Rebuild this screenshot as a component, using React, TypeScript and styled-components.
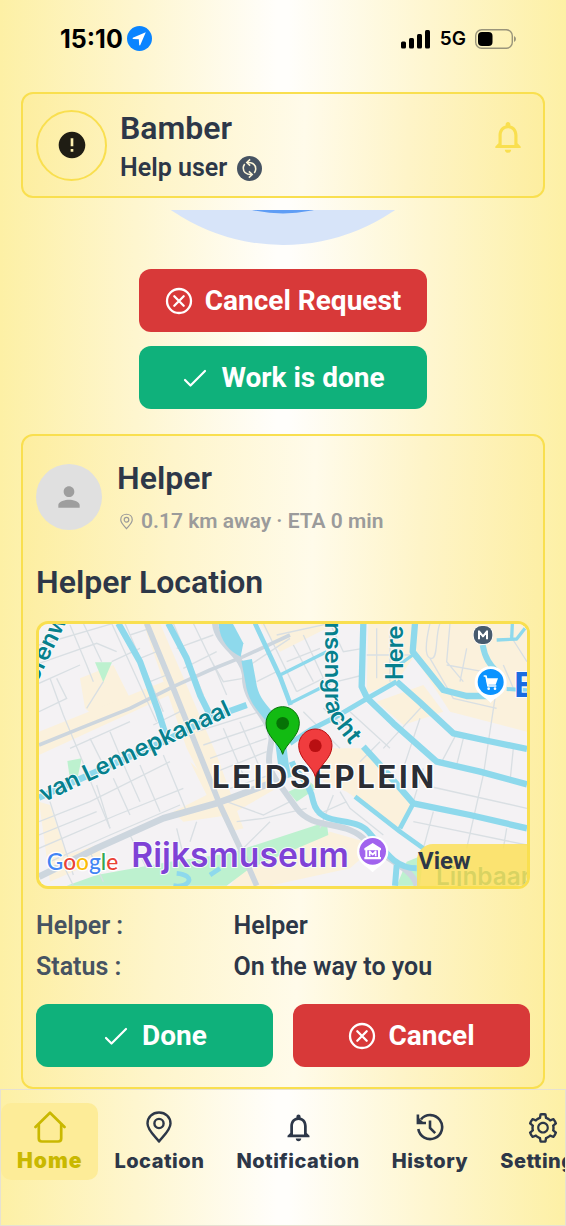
import React from "react";
import styled, { createGlobalStyle } from "styled-components";
import { MdError, MdNotificationsNone, MdPerson } from "react-icons/md";
import { AiOutlineSetting } from "react-icons/ai";

const ink = "#2d3748";
const slate = "#465362";
const gold = "#f9df4f";
const red = "#d83939";
const green = "#0fb17b";

const Global = createGlobalStyle`
  *, *::before, *::after { box-sizing: border-box; }
  body { margin: 0; font-family: Roboto, sans-serif; color: ${ink}; }
  h1, h2, h3, p, dl, dd, dt { margin: 0; }
  button { font-family: inherit; cursor: pointer; }
`;

const Screen = styled.div`
  min-height: 100vh;
  display: flex;
  flex-direction: column;
  background: linear-gradient(90deg, #fdf0a5 0%, #fef6cf 24%, #fffefb 49%, #fffefb 51%, #fef6cf 76%, #fdf0a5 100%);
`;

const StatusBar = styled.div`
  display: flex;
  justify-content: space-between;
  align-items: center;
  height: 77px;
  padding: 0 50px 0 60px;
  font-family: Inter, sans-serif;
  color: #000;
`;

const StatusGroup = styled.div<{ $gap: number }>`
  display: flex;
  align-items: center;
  gap: ${(p) => p.$gap}px;
`;

const Clock = styled.span`
  font-size: 25px;
  font-weight: 700;
`;

const Network = styled.span`
  font-size: 19px;
  font-weight: 600;
`;

const Panel = styled.section`
  border: 2px solid ${gold};
  border-radius: 12px;
  background: linear-gradient(92deg, #fdeea0 0%, #fef5cb 28%, #fffbea 54%, #fef4c8 74%, #fdeea0 100%);
`;

const Profile = styled(Panel)`
  display: flex;
  align-items: center;
  gap: 13px;
  height: 106px;
  margin: 15px 21px 0;
  padding: 0 16px 0 13px;
`;

const AlertRing = styled.div`
  display: grid;
  place-items: center;
  flex: none;
  width: 71px;
  height: 71px;
  border: 2px solid ${gold};
  border-radius: 50%;
  color: #1f1d14;
`;

const ProfileText = styled.div`
  flex: 1;
  padding-top: 6px;
`;

const Title = styled.h1`
  font-size: 32px;
  line-height: 40px;
  font-weight: 600;
`;

const Role = styled.p`
  display: flex;
  align-items: center;
  gap: 10px;
  font-size: 25px;
  line-height: 40px;
  font-weight: 600;
`;

const IconButton = styled.button`
  display: flex;
  padding: 0;
  border: 0;
  background: none;
  color: ${gold};
  margin-bottom: 16px;
`;

const Content = styled.main`
  flex: 1;
  display: flex;
  flex-direction: column;
  align-items: stretch;
  margin-top: 12px;
  padding: 0 21px;
`;

const Radar = styled.svg`
  display: block;
  align-self: center;
`;

const Actions = styled.div`
  display: flex;
  flex-direction: column;
  align-self: center;
  gap: 14px;
  width: 55%;
  min-width: 288px;
  margin: 24px 0 25px;
`;

const ActionButton = styled.button<{ $color: string }>`
  display: flex;
  align-items: center;
  justify-content: center;
  gap: 12px;
  height: 63px;
  width: 100%;
  padding: 0;
  border: 0;
  border-radius: 12px;
  background: ${(p) => p.$color};
  color: #fff;
  font-size: 28px;
  font-weight: 700;
  white-space: nowrap;
`;

const HelperCard = styled(Panel)`
  padding: 19px 13px 20px;
`;

const HelperHead = styled.div`
  display: flex;
  gap: 15px;
  align-items: center;
  height: 84px;
`;

const HelperText = styled.div`
  padding-top: 8px;
`;

const Avatar = styled.div`
  display: grid;
  place-items: center;
  flex: none;
  width: 66px;
  height: 66px;
  border-radius: 50%;
  background: #e0e0e0;
  color: #9e9e9e;
`;

const Meta = styled.p`
  display: flex;
  align-items: center;
  gap: 8px;
  padding-left: 3px;
  font-size: 21px;
  line-height: 46px;
  font-weight: 600;
  color: #9b9b9b;
`;

const Heading = styled.h2`
  margin: 23px 0 19px;
  font-size: 32px;
  line-height: 40px;
  font-weight: 600;
`;

const MapFrame = styled.div`
  position: relative;
  height: 268px;
  border: 3px solid ${gold};
  border-radius: 12px;
  overflow: hidden;
`;

const MapCanvas = styled.svg`
  display: block;
  width: 100%;
  height: 100%;
`;

const ViewButton = styled.button`
  position: absolute;
  right: 0;
  bottom: 0;
  width: 110px;
  height: 42px;
  padding: 0 0 8px 1px;
  border: 0;
  border-radius: 16px 0 0 0;
  background: rgba(252, 225, 91, 0.86);
  color: ${ink};
  font-size: 24px;
  font-weight: 700;
  text-align: left;
`;

const Details = styled.dl`
  display: grid;
  grid-template-columns: 40% 1fr;
  margin: 16px 0 17px;
  font-size: 25px;
  line-height: 41px;
  font-weight: 600;
`;

const Term = styled.dt`
  color: ${slate};
`;

const CardActions = styled.div`
  display: grid;
  grid-template-columns: 1fr 1fr;
  gap: 20px;
`;

const TabBar = styled.nav`
  display: flex;
  align-items: flex-start;
  height: 137px;
  padding: 13px 0 0;
  border: 1px solid #e6e1d2;
  overflow: hidden;
`;

const Tab = styled.a<{ $active?: boolean }>`
  display: flex;
  flex-direction: column;
  align-items: center;
  flex: none;
  height: 77px;
  padding: 8px 16px 0;
  border-radius: 10px;
  background: ${(p) => (p.$active ? "#fdec98" : "none")};
  color: ${(p) => (p.$active ? "#c9b800" : ink)};
  font-family: Inter, sans-serif;
  font-size: ${(p) => (p.$active ? 21 : 20)}px;
  line-height: 24px;
  font-weight: ${(p) => (p.$active ? 900 : 800)};
  letter-spacing: ${(p) => (p.$active ? 1 : 0.5)}px;
  text-decoration: none;
`;

const TabIcon = styled.span`
  display: grid;
  place-items: center;
  height: 32px;
  margin-bottom: 6px;
`;

const CheckIcon = () => (
  <svg width="28" height="28" viewBox="0 0 28 28" fill="none" stroke="#fff" strokeWidth="2.2" strokeLinecap="round" strokeLinejoin="round" aria-hidden="true">
    <path d="M4 16 L9.5 21.500 L24 7" />
  </svg>
);

const CrossIcon = () => (
  <svg width="28" height="28" viewBox="0 0 28 28" fill="none" stroke="#fff" strokeWidth="2.300" strokeLinecap="round" aria-hidden="true">
    <circle cx="14" cy="14" r="12" />
    <path d="M9.300 9.300 L18.700 18.700 M18.700 9.300 L9.300 18.700" />
  </svg>
);

const PinOutline = ({ width, height, stroke }: { width: number; height: number; stroke: number }) => (
  <svg width={width} height={height} viewBox="0 0 26 32" fill="none" stroke="currentColor" strokeWidth={stroke} strokeLinejoin="round" aria-hidden="true">
    <path d="M13 30.500 C10 26 1.500 19.500 1.500 12.500 C1.500 6 6.500 1.500 13 1.500 C19.500 1.500 24.500 6 24.500 12.500 C24.500 19.500 16 26 13 30.500 Z" />
    <circle cx="13" cy="12.500" r="4.600" />
  </svg>
);

const HomeIcon = () => (
  <svg width="32" height="32" viewBox="0 0 32 32" fill="none" stroke="currentColor" strokeWidth="2.700" strokeLinecap="round" strokeLinejoin="round" aria-hidden="true">
    <path d="M1.500 16 L16 1.800 L30.500 16" />
    <path d="M4.800 13.500 V27.500 Q4.800 30.500 7.800 30.500 H24.200 Q27.200 30.500 27.200 27.500 V13.500" />
  </svg>
);

const HistoryIcon = () => (
  <svg width="28" height="28" viewBox="0 0 28 28" fill="none" stroke="currentColor" strokeWidth="2.600" aria-hidden="true">
    <path d="M2.300 16 A12 12 0 1 0 5 6.300" />
    <path d="M1.900 1.500 V10 H10" />
    <path d="M2 4 L8 10 H2 Z" fill="currentColor" stroke="none" />
    <path d="M14 7.500 V15 L19.200 20.200" />
  </svg>
);

const SyncBadge = () => (
  <svg width="25" height="25" viewBox="0 0 24 24" aria-hidden="true">
    <circle cx="12" cy="12" r="12" fill={slate} />
    <g fill="none" stroke="#fdf6d8" strokeWidth="1.500">
      <path d="M10 6.200 Q17.800 6 18 12.500 Q17.900 14.500 16.600 16.300" />
      <path d="M14 17.800 Q6.200 18 6 11.500 Q6.100 9.500 7.400 7.700" />
      <path d="M12.600 3.200 L9.400 6.200 L12.600 9.200" />
      <path d="M11.400 14.800 L14.600 17.800 L11.400 20.800" />
    </g>
  </svg>
);

const StatusIcons = () => (
  <>
    <svg width="30" height="20" viewBox="0 0 30 20" aria-hidden="true">
      <rect x="0" y="12.500" width="5" height="7" rx="1.500" />
      <rect x="8" y="9" width="5" height="10.500" rx="1.500" />
      <rect x="16" y="5" width="5" height="14.500" rx="1.500" />
      <rect x="24" y="1" width="5" height="18.500" rx="1.500" />
    </svg>
    <Network>5G</Network>
    <svg width="41" height="20" viewBox="0 0 41 20" aria-hidden="true">
      <rect x="0.700" y="0.700" width="36.600" height="18.600" rx="6" fill="none" stroke="#9a957b" strokeWidth="1.400" />
      <path d="M39 7 Q41 8 41 10 Q41 12 39 13 Z" fill="#9a957b" />
      <rect x="3" y="3" width="14.500" height="14" rx="4" />
    </svg>
  </>
);

const MapPin = ({ x, y, fill, dot }: { x: number; y: number; fill: string; dot: string }) => (
  <g transform={`translate(${x} ${y})`}>
    <path d="M0 93 C-8 62 -50 40 -50 0 A50 50 0 0 1 50 0 C50 40 8 62 0 93 Z" fill={fill} stroke={dot} strokeWidth="3" />
    <circle r="19" fill={dot} />
  </g>
);

const MapArt = () => (
  <MapCanvas viewBox="27 27 1464 786" preserveAspectRatio="xMidYMid slice" role="img" aria-label="Map of helper location">
    <rect x="-500" y="0" width="2500" height="900" fill="#f4f2f4" />
    <g fill="#fbf1dc">
      <path d="M150 190 L250 150 L300 250 L330 270 L200 310 L165 280 Z" />
      <path d="M27 350 L400 200 L430 235 L27 420 Z" />
      <path d="M340 25 L390 25 L560 420 L640 640 L600 650 L470 400 Z" />
      <path d="M480 440 L600 560 L700 490 L740 520 L600 600 L460 620 L430 590 L530 540 Z" />
      <path d="M27 560 L60 570 L110 720 L200 690 L220 730 L60 800 Z" />
      <path d="M690 25 L800 25 L920 25 L750 110 Z" />
      <path d="M1015 25 L1145 25 L1155 120 L1100 200 L1010 235 Z" />
      <path d="M1165 25 L1491 25 L1491 350 L1260 290 L1150 120 Z" />
      <path d="M860 400 L1000 400 L1145 560 L1110 640 L950 530 L880 500 Z" />
      <path d="M1040 260 L1180 210 L1240 290 L1120 330 Z" />
      <path d="M600 812 L640 760 L900 650 L1040 690 L960 760 L720 812 Z" />
    </g>
    <g fill="#bdf1cf">
      <path d="M195 142 L246 142 L220 202 Z" />
      <path d="M112 438 L155 430 L142 492 L118 480 Z" />
      <path d="M110 812 L200 780 L420 740 L600 715 L890 620 L895 660 L660 760 L590 812 Z" />
      <path d="M775 530 L840 500 L860 520 L800 560 Z" />
      <path d="M1130 740 L1180 720 L1170 812 L1100 812 Z" />
    </g>
    <g fill="none" stroke="#d9dfe3" strokeWidth="4">
      <path d="M27 90 L250 25 M27 145 L200 85 L260 110 M27 205 L150 150 M27 290 L110 250 L80 190 M120 30 L170 150 L190 200 M160 25 L215 140 M60 190 L100 300 L150 420 L190 520 L240 640 M60 560 L130 780 M220 200 L170 280 M245 140 L330 100" />
      <path d="M120 400 L300 320 M180 370 L220 450 M240 350 L290 470 L330 560 M27 620 L180 560 L420 440 M27 660 L200 590 M27 700 L260 600 L460 520 M60 740 L240 660 L450 570 M200 510 L240 640 M250 490 L300 600 M330 450 L390 590 M400 420 L470 590" />
      <path d="M300 60 L360 40 M330 130 L380 110 M360 200 L410 180 M370 330 L450 290 M440 100 L550 60 M460 160 L560 110 M490 25 L560 170 L590 240 M540 130 L580 200 L640 190 M500 350 L690 290 M520 390 L700 330 M540 430 L710 370 M560 470 L710 410 M580 340 L640 480 M630 320 L690 460 M600 520 L720 480" />
      <path d="M430 25 L520 240 M285 25 L400 290 M245 25 L380 320 M590 560 L700 600 L780 560 M620 620 L700 610 L830 580 M640 700 L720 620 M500 620 L480 680 M440 640 L460 720 M300 660 L350 760 M180 710 L220 800 M100 750 L130 812" />
      <path d="M660 150 L780 70 M680 200 L740 170 M700 25 L800 230 M740 60 L900 25 M770 140 L870 100 M800 230 L880 190 M790 90 L850 200 M820 60 L880 190 M820 290 L930 400 M880 280 L950 340 M900 25 L940 110 L1000 100 M920 200 L1000 180" />
      <path d="M1040 40 L1040 190 M1080 60 L1080 200 M1010 120 L1140 120 M1200 25 C1180 110 1190 130 1205 130 C1225 130 1215 60 1230 25 M1260 25 L1250 140 L1300 200 M1310 100 L1290 200 M1250 150 L1360 170 M1200 130 L1270 250 L1400 280 M1440 60 L1491 140 M1420 150 L1450 220" />
      <path d="M1395 250 L1360 480 L1310 700 M1060 400 L1180 270 M1120 460 L1170 310 M1230 450 L1275 365 M1300 370 L1280 450 M1450 400 L1440 500 M1180 510 L1491 580 M1180 460 L1150 560 M1150 620 L1491 690 M1210 590 L1180 700 M1430 640 L1420 700 M960 290 L1080 400 M990 440 L1050 380 M930 530 L960 580 L1060 660 M860 600 L950 560 M870 640 L910 540" />
    </g>
    <g fill="none" stroke="#cdd6de" strokeLinejoin="round">
      <path strokeWidth="17" d="M350 25 L430 220 L510 420 L570 570 L640 720 L680 812" />
      <path strokeWidth="11" d="M27 390 L150 340 L300 280 L430 215 L540 165 L640 125 L780 60" />
      <path strokeWidth="20" d="M27 785 L200 700 L400 610 L560 565 L720 505" />
      <path strokeWidth="18" d="M555 25 C560 90 640 120 645 180 C640 260 715 300 725 370 C720 420 700 450 750 510 L800 580 C850 650 950 610 1010 680 C1060 730 1150 760 1160 812" />
    </g>
    <g fill="none" stroke="#8ed9ec" strokeWidth="19" strokeLinejoin="round">
      <path d="M265 25 L330 140 L385 290 L412 375" />
      <path d="M415 25 L470 130 L510 240 L545 310" />
      <path d="M27 548 L150 492 L400 380 L540 310 L650 270" />
      <path strokeWidth="32" d="M650 135 L662 200 C670 260 700 280 735 325 C760 370 750 430 770 490" />
      <path strokeWidth="14" d="M675 25 L710 100 L750 185 L782 270" />
      <path d="M1000 25 L995 215 L1012 250 L1090 325 L1220 440 L1350 470 L1491 508" />
      <path d="M1155 25 L1148 110 L1240 225 L1310 243 L1375 243" />
      <path strokeWidth="12" d="M1430 222 L1491 226" />
      <path d="M1100 200 L1170 262 L1270 355 L1375 378 L1491 402" />
      <path strokeWidth="15" d="M1100 200 L1012 250 L910 310 L840 345 L780 385" />
      <path d="M1000 395 L1050 450 L1150 565 L1320 600 L1491 640" />
      <path strokeWidth="14" d="M1150 565 L1110 640 M975 545 L1110 650 L1180 700" />
      <path strokeWidth="10" d="M750 180 L890 110 M780 265 L900 205 M1100 155 L1148 120 M750 180 L780 165" />
      <path strokeWidth="18" d="M1358 90 C1365 130 1380 150 1400 170" />
      <path strokeWidth="10" d="M1400 75 L1460 72 L1485 40 M1447 25 L1445 72" />
      <path strokeWidth="18" d="M785 440 C800 480 840 500 850 560 C870 640 970 600 1015 650 C1060 700 1090 760 1160 760 M1100 750 L1095 812" />
      <path strokeWidth="14" d="M430 812 C480 820 500 780 440 775 M540 780 L570 760" />
    </g>
    <path d="M565 25 L608 25 L640 85 L632 125 C600 110 570 80 565 25 Z" fill="#8ed9ec" />
    <g fontFamily="Inter, sans-serif" stroke="#f7fbfc" strokeWidth="6" strokeLinejoin="round" paintOrder="stroke">
      <g fill="#06808d" fontWeight="600" fontSize="71">
        <text transform="translate(42 562) rotate(-25)">van Lennepkanaal</text>
        <text transform="translate(20 205) rotate(-64)">orenw</text>
        <text transform="translate(1120 195) rotate(-90)">Here</text>
        <path id="canal" d="M885 22 L885 250 Q886 300 923 343 L1000 440" fill="none" stroke="none" />
        <text><textPath href="#canal">nsengracht</textPath></text>
        <text x="1218" y="810" fontSize="73">Lijnbaan</text>
      </g>
      <text x="1453" y="247" fontSize="102" fontWeight="700" fill="#1a6ce0">E</text>
      <text x="304" y="757" fontSize="101" fontWeight="600" fill="#7f42d6">Rijksmuseum</text>
      <g fill="#fff" stroke="none">
        <path d="M1028 772 C1015 755 981 745 981 710 A47 47 0 0 1 1075 710 C1075 745 1041 755 1028 772 Z" />
        <circle cx="1028" cy="709" r="40" fill="#a163ee" />
        <path d="M1003 700 L1028 684 L1053 700 V706 H1003 Z M1003 726 H1053 V733 H1003 Z M1006 706 H1012 V726 H1006 Z M1044 706 H1050 V726 H1044 Z" />
        <path d="M1019 724 V709 L1028 719 L1037 709 V724" fill="none" stroke="#fff" strokeWidth="5" />
        <path d="M1382 264 C1368 246 1334 238 1334 202 A48 48 0 0 1 1430 202 C1430 238 1396 246 1382 264 Z" />
        <circle cx="1382" cy="201" r="39" fill="#0b93ff" />
        <path d="M1368 190 H1404 L1397 209 H1372 Z" />
        <path d="M1361 183 H1368 L1374 213 H1399" fill="none" stroke="#fff" strokeWidth="5" />
        <circle cx="1376" cy="221" r="4" />
        <circle cx="1395" cy="221" r="4" />
        <rect x="1331" y="33" width="56" height="54" rx="24" fill="#485b6e" stroke="#fff" strokeWidth="4" />
        <path d="M1347 73 V49 L1359 64 L1371 49 V73" fill="none" stroke="#fff" strokeWidth="6" />
      </g>
    </g>
    <MapPin x={758} y={325} fill="#12bb12" dot="#067306" />
    <text x="546" y="520" fontFamily="Inter, sans-serif" fontSize="93" fontWeight="700" letterSpacing="8" fill="#2b2e35" stroke="#fff" strokeWidth="8" paintOrder="stroke">LEIDSEPLEIN</text>
    <MapPin x={856} y={392} fill="#f03c3e" dot="#b90f12" />
    <text x="50" y="766" fontFamily="Lato, sans-serif" fontSize="68" fontWeight="500" stroke="#fff" strokeWidth="8" paintOrder="stroke">
      <tspan fill="#4285f4">G</tspan><tspan fill="#ea4335">o</tspan><tspan fill="#fbbc05">o</tspan><tspan fill="#4285f4">g</tspan><tspan fill="#34a853">l</tspan><tspan fill="#ea4335">e</tspan>
    </text>
  </MapCanvas>
);

const tabs = [
  { label: "Home", icon: <HomeIcon />, active: true },
  { label: "Location", icon: <PinOutline width={26} height={32} stroke={2.4} /> },
  { label: "Notification", icon: <MdNotificationsNone size={33} /> },
  { label: "History", icon: <HistoryIcon /> },
  { label: "Settings", icon: <AiOutlineSetting size={34} /> },
];

export default function App() {
  return (
    <Screen>
      <Global />
      <StatusBar>
        <StatusGroup $gap={4}>
          <Clock>15:10</Clock>
          <svg width="25" height="25" viewBox="0 0 25 25" aria-hidden="true">
            <circle cx="12.500" cy="12.500" r="12.500" fill="#0a84ff" />
            <path d="M18.800 6.200 L5.800 11.800 Q5.200 12.500 6 12.900 L11.800 13.200 L12.200 19 Q12.700 19.700 13.200 19.200 Z" fill="#fff" />
          </svg>
        </StatusGroup>
        <StatusGroup $gap={9}>
          <StatusIcons />
        </StatusGroup>
      </StatusBar>

      <Profile>
        <AlertRing><MdError size={32} /></AlertRing>
        <ProfileText>
          <Title>Bamber</Title>
          <Role>Help user <SyncBadge /></Role>
        </ProfileText>
        <IconButton aria-label="Notifications"><MdNotificationsNone size={38} /></IconButton>
      </Profile>

      <Content>
        <Radar width="226" height="35" viewBox="0 0 226 35" aria-hidden="true">
          <circle cx="113" cy="-162" r="197" fill="#d7e4f9" />
          <circle cx="113" cy="-135" r="138.500" fill="#5f9df5" />
        </Radar>
        <Actions>
          <ActionButton $color={red}><CrossIcon />Cancel Request</ActionButton>
          <ActionButton $color={green}><CheckIcon />Work is done</ActionButton>
        </Actions>

        <HelperCard>
          <HelperHead>
            <Avatar><MdPerson size={32} /></Avatar>
            <HelperText>
              <Title as="h2">Helper</Title>
              <Meta><PinOutline width={13} height={17} stroke={2.4} />0.17 km away · ETA 0 min</Meta>
            </HelperText>
          </HelperHead>
          <Heading>Helper Location</Heading>
          <MapFrame>
            <MapArt />
            <ViewButton>View</ViewButton>
          </MapFrame>
          <Details>
            <Term>Helper :</Term>
            <dd>Helper</dd>
            <Term>Status :</Term>
            <dd>On the way to you</dd>
          </Details>
          <CardActions>
            <ActionButton $color={green}><CheckIcon />Done</ActionButton>
            <ActionButton $color={red}><CrossIcon />Cancel</ActionButton>
          </CardActions>
        </HelperCard>
      </Content>

      <TabBar>
        {tabs.map((t) => (
          <Tab key={t.label} href="#" $active={t.active}>
            <TabIcon>{t.icon}</TabIcon>
            {t.label}
          </Tab>
        ))}
      </TabBar>
    </Screen>
  );
}
